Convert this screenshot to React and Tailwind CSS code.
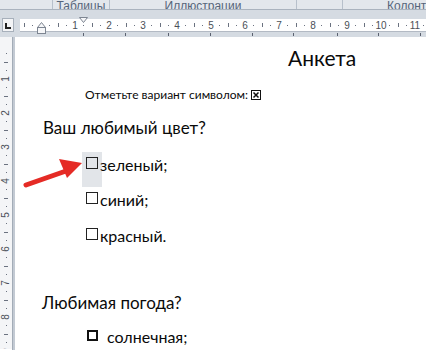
import React from "react";

function HRuler() {
  const nums = [];
  const marks = [];
  for (let k = -1; k <= 12; k++) {
    const x = 21 + 34 * k;
    if (k >= 1 && k <= 11) {
      nums.push(
        <text key={"n" + k} x={x} y={12} fontSize="10" fill="#4a4f57" textAnchor="middle" fontFamily="Liberation Sans, sans-serif">{k}</text>
      );
    }
    marks.push(<rect key={"h" + k} x={x + 17} y={6} width={1} height={4} fill="#6b7280" />);
    marks.push(<rect key={"d1" + k} x={x + 8} y={8} width={1} height={1} fill="#6b7280" />);
    marks.push(<rect key={"d2" + k} x={x + 25} y={8} width={1} height={1} fill="#6b7280" />);
  }
  const tabs = [83, 125, 168, 210, 252, 293, 337, 378, 420];
  return (
    <svg width="406" height="20" className="block">
      <rect x="0" y="2" width="406" height="12" fill="#ffffff" />
      <rect x="0" y="14" width="406" height="1" fill="#b3bac4" />
      {marks}
      {nums}
      {tabs.map((t) => (
        <rect key={t} x={t - 20} y={16} width={1} height={3} fill="#5b6270" />
      ))}
      <path d="M59.5 0.5 L67.5 0.5 L63.5 5.5 Z" fill="#f5f6f8" stroke="#7d8591" />
      <path d="M21.5 5.5 L25.5 10.5 L17.5 10.5 Z" fill="#f5f6f8" stroke="#7d8591" />
      <rect x="17.5" y="10.5" width="8" height="6" fill="#f5f6f8" stroke="#7d8591" />
    </svg>
  );
}

function VRuler() {
  const items = [];
  for (let k = 0; k <= 9; k++) {
    const y = 8 + 34 * k;
    if (k >= 1) {
      items.push(
        <text key={"n" + k} x={6} y={y} fontSize="10" fill="#4a4f57" textAnchor="middle" dominantBaseline="middle" transform={`rotate(-90 6 ${y})`} fontFamily="Liberation Sans, sans-serif">{k}</text>
      );
    }
    items.push(<rect key={"h" + k} x={4} y={y + 17} width={4} height={1} fill="#6b7280" />);
    items.push(<rect key={"a" + k} x={6} y={y + 8} width={1} height={1} fill="#6b7280" />);
    items.push(<rect key={"b" + k} x={6} y={y + 25} width={1} height={1} fill="#6b7280" />);
  }
  return (
    <svg width="12" height="312" className="block">
      <rect x="0" y="0" width="12" height="312" fill="#f4f5f7" />
      {items}
    </svg>
  );
}

function Box({ thick }) {
  return (
    <span
      className={
        thick
          ? "inline-block w-[11px] h-[11px] border-2 border-[#111]"
          : "inline-block w-[12px] h-[12px] border border-[#222]"
      }
    />
  );
}

export default function App() {
  const font = "font-['Lato','Liberation_Sans',sans-serif]";
  return (
    <div className="w-[426px] h-[350px] overflow-hidden bg-white flex flex-col relative">
      <div className="h-[10px] bg-[#e3e7ec] flex text-[12px] leading-none text-[#56657a] font-['Liberation_Sans',sans-serif] overflow-hidden border-b border-[#aab3be]">
        <div className="w-[53px] border-r border-[#b7c0cb]" />
        <div className="w-[57px] border-r border-[#b7c0cb] flex justify-center items-end overflow-hidden">
          <span className="-mb-[3px]">Таблицы</span>
        </div>
        <div className="w-[187px] border-r border-[#b7c0cb] flex justify-center items-end overflow-hidden">
          <span className="-mb-[3px]">Иллюстрации</span>
        </div>
        <div className="w-[46px] border-r border-[#b7c0cb]" />
        <div className="flex-1 flex items-end overflow-hidden pl-[44px]">
          <span className="-mb-[3px] whitespace-nowrap">Колонт</span>
        </div>
      </div>
      <div className="h-[27px] bg-[#d5dbe2] flex pt-[7px]">
        <div className="w-[20px] flex items-start pl-[2px] pt-[1px]">
          <div className="w-[12px] h-[14px] bg-[#f3f4f6] border border-[#a7b0bb] flex items-center justify-center">
            <span className="block w-[6px] h-[6px] border-l-2 border-b-2 border-[#222] mt-[1px]" />
          </div>
        </div>
        <HRuler />
      </div>
      <div className="flex flex-1">
        <div className="flex">
          <VRuler />
          <div className="w-[3px] bg-[#c3cad3] border-l border-[#a3acb7]" />
        </div>
        <div className={`flex-1 flex flex-col text-[#0a0a0a] ${font} relative`}>
          <div className="ml-[273px] mt-[10px] text-[21px] leading-none">Анкета</div>
          <div className="ml-[70px] mt-[21px] text-[12px] leading-none flex items-center gap-[3px]">
            <span>Отметьте вариант символом:</span>
            <svg width="10" height="10" className="block">
              <rect x="0.5" y="0.5" width="9" height="9" fill="none" stroke="#111" />
              <path d="M2.5 2.5 L7.5 7.5 M7.5 2.5 L2.5 7.5" stroke="#111" strokeWidth="1.5" />
            </svg>
          </div>
          <div className="ml-[28px] mt-[18px] text-[17px] leading-none">Ваш любимый цвет?</div>
          <div className="ml-[71px] mt-[19px] text-[16px] leading-none flex items-end gap-[2px] relative">
            <span className="absolute -left-[4px] -top-[3px] w-[20px] h-[35px] bg-[#e2e5e9]" />
            <span className="relative mb-[2px]"><Box /></span>
            <span className="relative">зеленый;</span>
          </div>
          <div className="ml-[71px] mt-[17px] text-[16px] leading-none flex items-end gap-[2px]">
            <span className="mb-[2px]"><Box /></span>
            <span>синий;</span>
          </div>
          <div className="ml-[71px] mt-[18px] text-[16px] leading-none flex items-end gap-[2px]">
            <span className="mb-[2px]"><Box /></span>
            <span>красный.</span>
          </div>
          <div className="ml-[27px] mt-[50px] text-[17px] leading-none">Любимая погода?</div>
          <div className="ml-[72px] mt-[16px] text-[16px] leading-none flex items-end gap-[9px]">
            <span className="mb-[2px]"><Box thick /></span>
            <span>солнечная;</span>
          </div>
        </div>
      </div>
      <svg className="absolute left-0 top-0 pointer-events-none" width="426" height="350">
        <line x1="26" y1="185" x2="66" y2="171" stroke="#e52b25" strokeWidth="5" strokeLinecap="round" />
        <path d="M82 163 L67 178 L59 159 Z" fill="#e52b25" />
      </svg>
    </div>
  );
}
